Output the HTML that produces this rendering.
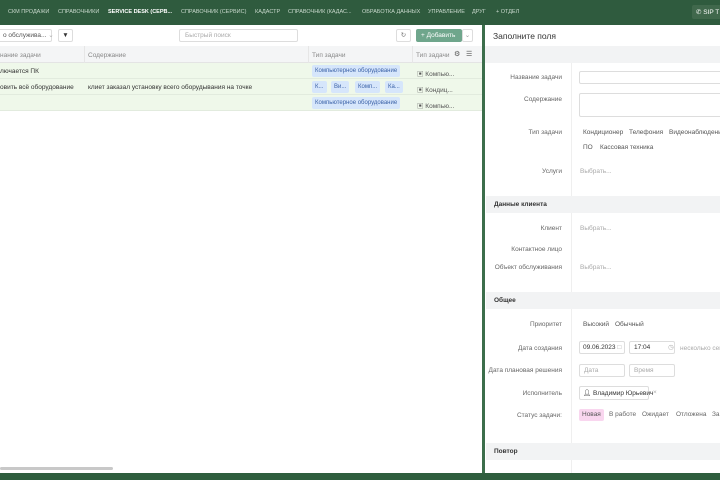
<!DOCTYPE html>
<html><head><meta charset="utf-8"><style>
*{box-sizing:border-box;margin:0;padding:0}
body{width:720px;height:480px;overflow:hidden;background:#fff;font-family:"Liberation Sans","Noto Sans CJK SC",sans-serif;font-size:7px;color:#333;position:relative}
.a{position:absolute;white-space:nowrap}
.top{left:0;top:0;width:720px;height:25px;background:#2f5b3e}
.nav{top:9px;color:#c9d9cd;font-size:5.5px}
.row{left:0;width:482px;height:16px;background:#eff8ea;border-bottom:1px solid #e2ebde}
.tag{background:#d6e6fb;color:#3c63a8;border-radius:2px;height:12px;line-height:12px;padding:0 3px;font-size:6px}
.lbl{color:#666;font-size:6.5px;text-align:right;width:82px;left:480px}
.inp{border:1px solid #ddd;border-radius:2px;background:#fff;line-height:11px;font-size:6.5px}
.band{left:486px;width:234px;height:17px;background:#f2f3f4;font-weight:bold;font-size:6.5px;padding:5px 8px;color:#333}
.ph{color:#aaa;font-size:6.5px}
</style></head><body>
<div class="a top"></div>
<div class="a nav" style="left:8px">СКМ ПРОДАЖИ</div>
<div class="a nav" style="left:58px">СПРАВОЧНИКИ</div>
<div class="a nav" style="left:108px;color:#fff;font-weight:bold">SERVICE DESK (СЕРВ...</div>
<div class="a nav" style="left:181px">СПРАВОЧНИК (СЕРВИС)</div>
<div class="a nav" style="left:255px">КАДАСТР</div>
<div class="a nav" style="left:288px">СПРАВОЧНИК (КАДАС...</div>
<div class="a nav" style="left:362px">ОБРАБОТКА ДАННЫХ</div>
<div class="a nav" style="left:428px">УПРАВЛЕНИЕ</div>
<div class="a nav" style="left:472px">ДРУГ</div>
<div class="a nav" style="left:496px">+ ОТДЕЛ</div>
<div class="a" style="left:692px;top:5px;width:30px;height:14px;background:#40684c;border-radius:2px;color:#fff;font-size:6.5px;padding:3px 4px">&#x2706; SIP T</div>

<div class="a inp" style="left:-4px;top:29px;width:56px;height:13px;padding:0 6px;color:#555">о обслужива... <span style="color:#aaa">&#8964;</span></div>
<div class="a inp" style="left:58px;top:29px;width:15px;height:13px;text-align:center">&#x25BC;</div>
<div class="a inp" style="left:179px;top:29px;width:119px;height:13px;padding:0 5px"><span class="ph">Быстрый поиск</span></div>
<div class="a inp" style="left:396px;top:29px;width:15px;height:13px;text-align:center;color:#777">&#x21bb;</div>
<div class="a" style="left:416px;top:29px;width:46px;height:13px;background:#6fa68c;border-radius:2px;color:#fff;font-size:6.5px;line-height:13px;padding:0 5px">+ Добавить</div>
<div class="a inp" style="left:462px;top:29px;width:11px;height:13px;color:#999;text-align:center">&#8964;</div>

<div class="a" style="left:0;top:46px;width:482px;height:17px;background:#f4f5f6;border-bottom:1px solid #e4e4e4"></div>
<div class="a" style="left:84px;top:46px;width:1px;height:65px;background:#e6e6e6"></div>
<div class="a" style="left:308px;top:46px;width:1px;height:65px;background:#e6e6e6"></div>
<div class="a" style="left:412px;top:46px;width:1px;height:65px;background:#e6e6e6"></div>
<div class="a ph" style="left:0;top:52px;color:#888">нание задачи</div>
<div class="a ph" style="left:88px;top:52px;color:#888">Содержание</div>
<div class="a ph" style="left:312px;top:52px;color:#888">Тип задачи</div>
<div class="a ph" style="left:416px;top:52px;color:#888">Тип задачи</div>
<div class="a" style="left:454px;top:50px;font-size:7px;color:#555">&#9881;</div>
<div class="a" style="left:466px;top:50px;font-size:7px;color:#555">&#9776;</div>

<div class="a row" style="top:63px"></div>
<div class="a row" style="top:79px"></div>
<div class="a row" style="top:95px"></div>
<div class="a" style="left:0;top:68px;font-size:6.5px">лючается ПК</div>
<div class="a" style="left:0;top:84px;font-size:6.5px">овить всё оборудование</div>
<div class="a" style="left:88px;top:84px;font-size:6.5px">клиет заказал установку всего оборудывания на точке</div>
<div class="a tag" style="left:312px;top:65px">Компьютерное оборудование</div>
<div class="a tag" style="left:312px;top:81px">К...</div>
<div class="a tag" style="left:331px;top:81px">Ви...</div>
<div class="a tag" style="left:355px;top:81px">Комп...</div>
<div class="a tag" style="left:385px;top:81px">Ка...</div>
<div class="a tag" style="left:312px;top:97px">Компьютерное оборудование</div>
<div class="a" style="left:417px;top:68px;font-size:6.5px;color:#555">&#9635; Компью...</div>
<div class="a" style="left:417px;top:84px;font-size:6.5px;color:#555">&#9635; Кондиц...</div>
<div class="a" style="left:417px;top:100px;font-size:6.5px;color:#555">&#9635; Компью...</div>

<div class="a" style="left:0;top:467px;width:113px;height:3px;background:#c8c8c8;border-radius:2px"></div>

<div class="a" style="left:482px;top:25px;width:3px;height:455px;background:#3c6e4b"></div>

<div class="a" style="left:493px;top:31px;font-size:8.5px;color:#333">Заполните поля</div>
<div class="a" style="left:485px;top:46px;width:235px;height:17px;background:#f2f3f4"></div>
<div class="a" style="left:571px;top:63px;width:1px;height:410px;background:#efefef"></div>
<div class="a lbl" style="top:74px">Название задачи</div>
<div class="a inp" style="left:579px;top:71px;width:150px;height:13px"></div>
<div class="a lbl" style="top:96px">Содержание</div>
<div class="a inp" style="left:579px;top:93px;width:150px;height:24px"></div>
<div class="a lbl" style="top:129px">Тип задачи</div>
<div class="a" style="left:583px;top:129px;font-size:6.5px;color:#555">Кондиционер</div>
<div class="a" style="left:629px;top:129px;font-size:6.5px;color:#555">Телефония</div>
<div class="a" style="left:669px;top:129px;font-size:6.5px;color:#555">Видеонаблюдение</div>
<div class="a" style="left:583px;top:144px;font-size:6.5px;color:#555">ПО</div>
<div class="a" style="left:600px;top:144px;font-size:6.5px;color:#555">Кассовая техника</div>
<div class="a lbl" style="top:168px">Услуги</div>
<div class="a ph" style="left:580px;top:168px">Выбрать...</div>

<div class="a band" style="top:196px">Данные клиента</div>
<div class="a lbl" style="top:225px">Клиент</div>
<div class="a ph" style="left:580px;top:225px">Выбрать...</div>
<div class="a lbl" style="top:246px">Контактное лицо</div>
<div class="a lbl" style="top:264px">Объект обслуживания</div>
<div class="a ph" style="left:580px;top:264px">Выбрать...</div>

<div class="a band" style="top:292px">Общее</div>
<div class="a lbl" style="top:321px">Приоритет</div>
<div class="a" style="left:583px;top:321px;font-size:6.5px;color:#555">Высокий</div>
<div class="a" style="left:615px;top:321px;font-size:6.5px;color:#555">Обычный</div>
<div class="a lbl" style="top:345px">Дата создания</div>
<div class="a inp" style="left:579px;top:341px;width:46px;height:13px;padding:0 3px">09.06.2023 <span style="color:#aaa">&#9633;</span></div>
<div class="a inp" style="left:629px;top:341px;width:46px;height:13px;padding:0 4px">17:04 <span style="color:#aaa;margin-left:16px">&#9719;</span></div>
<div class="a ph" style="left:680px;top:345px">несколько сек</div>
<div class="a lbl" style="top:367px">Дата плановая решения</div>
<div class="a inp" style="left:579px;top:364px;width:46px;height:13px;padding:0 4px"><span class="ph">Дата</span></div>
<div class="a inp" style="left:629px;top:364px;width:46px;height:13px;padding:0 4px"><span class="ph">Время</span></div>
<div class="a lbl" style="top:390px">Исполнитель</div>
<div class="a inp" style="left:579px;top:386px;width:70px;height:14px;padding:1px 3px">&#x1F464;&#xFE0E; Владимир Юрьевич</div>
<div class="a ph" style="left:653px;top:389px">&#215;</div>
<div class="a lbl" style="top:412px">Статус задачи:</div>
<div class="a" style="left:579px;top:409px;height:12px;background:#f9d6ef;border-radius:2px;padding:2px 3px;font-size:6.5px;color:#555">Новая</div>
<div class="a" style="left:609px;top:411px;font-size:6.5px;color:#666">В работе</div>
<div class="a" style="left:642px;top:411px;font-size:6.5px;color:#666">Ожидает</div>
<div class="a" style="left:676px;top:411px;font-size:6.5px;color:#666">Отложена</div>
<div class="a" style="left:712px;top:411px;font-size:6.5px;color:#666">За</div>

<div class="a band" style="top:443px">Повтор</div>

<div class="a" style="left:0;top:473px;width:720px;height:7px;background:#2f5e3e"></div>
</body></html>
